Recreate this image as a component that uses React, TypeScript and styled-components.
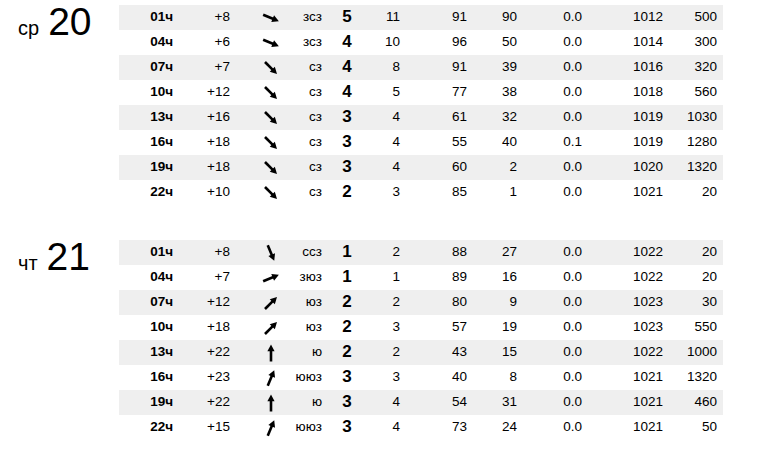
import React from "react";
import styled, { createGlobalStyle } from "styled-components";

const GlobalStyle = createGlobalStyle`
  body {
    margin: 0;
    background: #fff;
    font-family: "Liberation Sans", Arial, sans-serif;
    color: #000;
  }
`;

type Row = [string, string, string, string, string, string, string, string, string, string];

const HEADING: Record<string, number> = {
  "зсз": 112.5,
  "сз": 135,
  "ссз": 157.5,
  "зюз": 67.5,
  "юз": 45,
  "ю": 0,
  "ююз": 22.5,
};

const days: { dow: string; day: string; rows: Row[] }[] = [
  {
    dow: "ср",
    day: "20",
    rows: [
      ["01ч", "+8", "зсз", "5", "11", "91", "90", "0.0", "1012", "500"],
      ["04ч", "+6", "зсз", "4", "10", "96", "50", "0.0", "1014", "300"],
      ["07ч", "+7", "сз", "4", "8", "91", "39", "0.0", "1016", "320"],
      ["10ч", "+12", "сз", "4", "5", "77", "38", "0.0", "1018", "560"],
      ["13ч", "+16", "сз", "3", "4", "61", "32", "0.0", "1019", "1030"],
      ["16ч", "+18", "сз", "3", "4", "55", "40", "0.1", "1019", "1280"],
      ["19ч", "+18", "сз", "3", "4", "60", "2", "0.0", "1020", "1320"],
      ["22ч", "+10", "сз", "2", "3", "85", "1", "0.0", "1021", "20"],
    ],
  },
  {
    dow: "чт",
    day: "21",
    rows: [
      ["01ч", "+8", "ссз", "1", "2", "88", "27", "0.0", "1022", "20"],
      ["04ч", "+7", "зюз", "1", "1", "89", "16", "0.0", "1022", "20"],
      ["07ч", "+12", "юз", "2", "2", "80", "9", "0.0", "1023", "30"],
      ["10ч", "+18", "юз", "2", "3", "57", "19", "0.0", "1023", "550"],
      ["13ч", "+22", "ю", "2", "2", "43", "15", "0.0", "1022", "1000"],
      ["16ч", "+23", "ююз", "3", "3", "40", "8", "0.0", "1021", "1320"],
      ["19ч", "+22", "ю", "3", "4", "54", "31", "0.0", "1021", "460"],
      ["22ч", "+15", "ююз", "3", "4", "73", "24", "0.0", "1021", "50"],
    ],
  },
];

const Page = styled.div`
  display: flex;
  flex-direction: column;
  gap: 35px;
  padding-top: 5px;
`;

const DayBlock = styled.section`
  display: flex;
  align-items: flex-start;
`;

const DayLabel = styled.div`
  width: 119px;
  box-sizing: border-box;
  padding-left: 18px;
  display: flex;
  align-items: baseline;
  gap: 9px;
  height: 36px;
  line-height: 36px;
  margin-top: -1px;
`;

const Dow = styled.span`
  font-size: 20px;
`;

const DayNum = styled.span`
  font-size: 39px;
`;

const Table = styled.div`
  width: 604px;
  display: flex;
  flex-direction: column;
`;

const TableRow = styled.div<{ $shaded: boolean }>`
  display: grid;
  grid-template-columns: 54px 57px 82px 10px 50px 28px 67px 50px 65px 81px 54px;
  height: 25px;
  align-items: center;
  font-size: 13px;
  background: ${(p) => (p.$shaded ? "#efefef" : "#fff")};
`;

const Cell = styled.div<{ $align?: "start" | "center" | "end"; $bold?: boolean; $big?: boolean }>`
  display: flex;
  justify-content: ${(p) =>
    p.$align === "center" ? "center" : p.$align === "start" ? "flex-start" : "flex-end"};
  white-space: nowrap;
  font-weight: ${(p) => (p.$bold ? 700 : 400)};
  font-size: ${(p) => (p.$big ? "17px" : "13.5px")};
  line-height: 25px;
  margin-top: -2px;
`;

const ArrowSvg = styled.svg<{ $deg: number }>`
  width: 20px;
  height: 20px;
  display: block;
  transform: rotate(${(p) => p.$deg}deg);
`;

const WindArrow: React.FC<{ deg: number }> = ({ deg }) => (
  <ArrowSvg $deg={deg} viewBox="0 0 20 20">
    <line x1="10" y1="18.5" x2="10" y2="6" stroke="#000" strokeWidth="2.6" />
    <polygon points="10,1.5 6.4,8.2 13.6,8.2" fill="#000" />
  </ArrowSvg>
);

const ArrowCell = styled.div`
  display: flex;
  justify-content: center;
`;

const DayTable: React.FC<{ rows: Row[] }> = ({ rows }) => (
  <Table>
    {rows.map((r, i) => (
      <TableRow key={r[0]} $shaded={i % 2 === 0}>
        <Cell $bold>{r[0]}</Cell>
        <Cell>{r[1]}</Cell>
        <ArrowCell>
          <WindArrow deg={HEADING[r[2]]} />
        </ArrowCell>
        <Cell>{r[2]}</Cell>
        <Cell $align="center" $bold $big>
          {r[3]}
        </Cell>
        <Cell>{r[4]}</Cell>
        <Cell>{r[5]}</Cell>
        <Cell>{r[6]}</Cell>
        <Cell>{r[7]}</Cell>
        <Cell>{r[8]}</Cell>
        <Cell>{r[9]}</Cell>
      </TableRow>
    ))}
  </Table>
);

export default function App() {
  return (
    <>
      <GlobalStyle />
      <Page>
        {days.map((d) => (
          <DayBlock key={d.day}>
            <DayLabel>
              <Dow>{d.dow}</Dow>
              <DayNum>{d.day}</DayNum>
            </DayLabel>
            <DayTable rows={d.rows} />
          </DayBlock>
        ))}
      </Page>
    </>
  );
}
